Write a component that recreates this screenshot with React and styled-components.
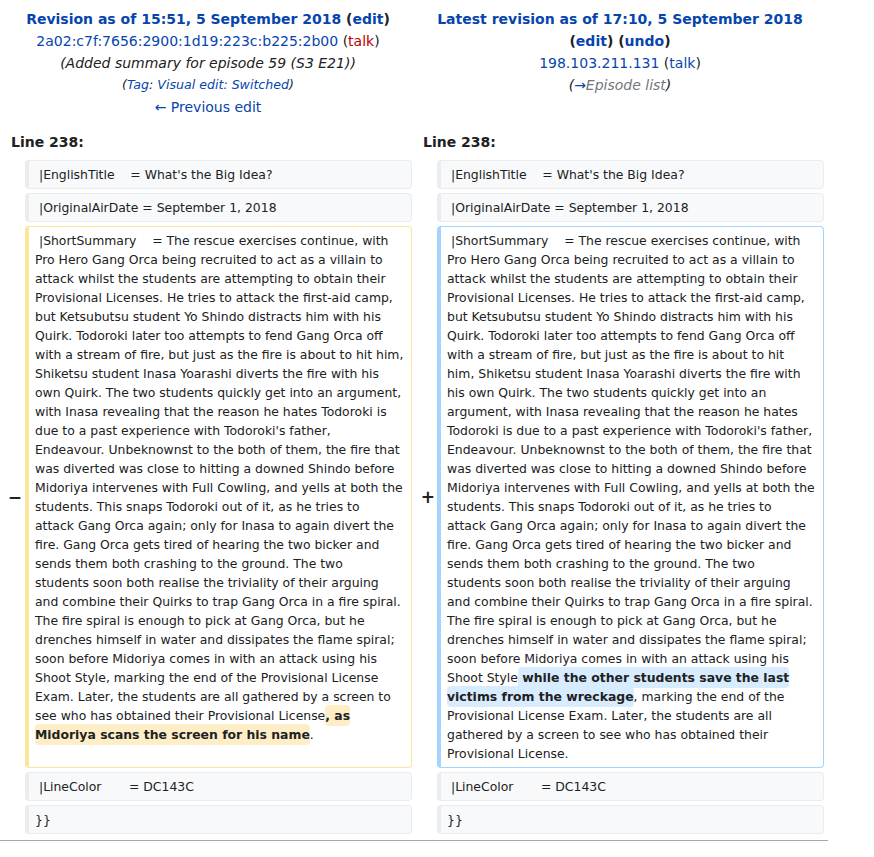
import React from 'react';
import styled, { createGlobalStyle } from 'styled-components';

const GlobalStyle = createGlobalStyle`
    body {
        margin: 0;
        background: #ffffff;
        color: #202122;
        font-family: "DejaVu Sans", sans-serif;
        font-size: 14px;
    }
`

const Page = styled.div`
    width: 828px;
`

const DiffGrid = styled.div`
    display: grid;
    grid-template-columns: 17px 387px 17px 387px;
    gap: 4px;
    padding: 4px;
`

const Header = styled.div`
    grid-column: span 2;
    text-align: center;
    line-height: 22px;
    padding-top: 4px;
`

const HeaderLine = styled.div`
    font-size: ${p => p.small ? '12.6px' : '14px'};
    font-style: ${p => p.italic ? 'italic' : 'normal'};
    font-weight: ${p => p.bold ? 'bold' : 'normal'};
    color: #202122;
`

const A = styled.a`
    color: ${p => p.red ? '#ba0000' : p.muted ? '#72777d' : '#0645ad'};
    text-decoration: none;
`

const LineNo = styled.div`
    grid-column: span 2;
    font-weight: bold;
    line-height: 22px;
    padding: 9px 7px 3px;
`

const Marker = styled.div`
    display: flex;
    align-items: center;
    justify-content: flex-end;
    font-weight: bold;
    font-size: 17px;
    span {
        margin-right: ${p => p.plus ? '-2px' : '-1px'};
    }
`

const Cell = styled.div`
    font-size: 12.42px;
    line-height: 19px;
    white-space: pre-wrap;
    padding: 4px 6px;
    border: 1px solid ${p => p.kind === 'del' ? '#ffe49c' : p.kind === 'ins' ? '#a3d3ff' : '#eaecf0'};
    border-left-width: 4px;
    border-radius: 4px;
    background: ${p => p.kind ? '#ffffff' : '#f8f9fa'};
`

const Change = styled.span`
    font-weight: bold;
    background: ${p => p.kind === 'del' ? '#feeec8' : '#d8ecff'};
    border-radius: 4px;
    padding: 3px 0;
    box-decoration-break: clone;
    -webkit-box-decoration-break: clone;
`

const Divider = styled.div`
    height: 1px;
    margin-top: 2px;
    background: #a2a9b1;
`

// wikitext lines, broken where the rendered diff wraps them
const oldLines = [
    ' |ShortSummary    = The rescue exercises continue, with',
    'Pro Hero Gang Orca being recruited to act as a villain to',
    'attack whilst the students are attempting to obtain their',
    'Provisional Licenses. He tries to attack the first-aid camp,',
    'but Ketsubutsu student Yo Shindo distracts him with his',
    'Quirk. Todoroki later too attempts to fend Gang Orca off',
    'with a stream of fire, but just as the fire is about to hit him,',
    'Shiketsu student Inasa Yoarashi diverts the fire with his',
    'own Quirk. The two students quickly get into an argument,',
    'with Inasa revealing that the reason he hates Todoroki is',
    "due to a past experience with Todoroki's father,",
    'Endeavour. Unbeknownst to the both of them, the fire that',
    'was diverted was close to hitting a downed Shindo before',
    'Midoriya intervenes with Full Cowling, and yells at both the',
    'students. This snaps Todoroki out of it, as he tries to',
    'attack Gang Orca again; only for Inasa to again divert the',
    'fire. Gang Orca gets tired of hearing the two bicker and',
    'sends them both crashing to the ground. The two',
    'students soon both realise the triviality of their arguing',
    'and combine their Quirks to trap Gang Orca in a fire spiral.',
    'The fire spiral is enough to pick at Gang Orca, but he',
    'drenches himself in water and dissipates the flame spiral;',
    'soon before Midoriya comes in with an attack using his',
    'Shoot Style, marking the end of the Provisional License',
    'Exam. Later, the students are all gathered by a screen to',
    'see who has obtained their Provisional License',
].join('\n')

const newLines = [
    ' |ShortSummary    = The rescue exercises continue, with',
    'Pro Hero Gang Orca being recruited to act as a villain to',
    'attack whilst the students are attempting to obtain their',
    'Provisional Licenses. He tries to attack the first-aid camp,',
    'but Ketsubutsu student Yo Shindo distracts him with his',
    'Quirk. Todoroki later too attempts to fend Gang Orca off',
    'with a stream of fire, but just as the fire is about to hit',
    'him, Shiketsu student Inasa Yoarashi diverts the fire with',
    'his own Quirk. The two students quickly get into an',
    'argument, with Inasa revealing that the reason he hates',
    "Todoroki is due to a past experience with Todoroki's father,",
    'Endeavour. Unbeknownst to the both of them, the fire that',
    'was diverted was close to hitting a downed Shindo before',
    'Midoriya intervenes with Full Cowling, and yells at both the',
    'students. This snaps Todoroki out of it, as he tries to',
    'attack Gang Orca again; only for Inasa to again divert the',
    'fire. Gang Orca gets tired of hearing the two bicker and',
    'sends them both crashing to the ground. The two',
    'students soon both realise the triviality of their arguing',
    'and combine their Quirks to trap Gang Orca in a fire spiral.',
    'The fire spiral is enough to pick at Gang Orca, but he',
    'drenches himself in water and dissipates the flame spiral;',
    'soon before Midoriya comes in with an attack using his',
    'Shoot Style',
].join('\n')

const contextBefore = [
    " |EnglishTitle    = What's the Big Idea?",
    ' |OriginalAirDate = September 1, 2018',
]

const contextAfter = [
    ' |LineColor       = DC143C',
    '}}',
]

function ContextRow({ text }) {
    return (
        <>
            <div />
            <Cell>{text}</Cell>
            <div />
            <Cell>{text}</Cell>
        </>
    );
}

export default function App() {
    return (
        <Page>
            <GlobalStyle />
            <DiffGrid>
                <Header>
                    <HeaderLine bold>
                        <A>Revision as of 15:51, 5 September 2018</A> (<A>edit</A>)
                    </HeaderLine>
                    <HeaderLine>
                        <A>2a02:c7f:7656:2900:1d19:223c:b225:2b00</A> (<A red>talk</A>)
                    </HeaderLine>
                    <HeaderLine italic>(Added summary for episode 59 (S3 E21))</HeaderLine>
                    <HeaderLine italic small>
                        (<A>Tag</A>: <A>Visual edit: Switched</A>)
                    </HeaderLine>
                    <HeaderLine>
                        <A>← Previous edit</A>
                    </HeaderLine>
                </Header>
                <Header>
                    <HeaderLine bold>
                        <A>Latest revision as of 17:10, 5 September 2018</A> (<A>edit</A>) (<A>undo</A>)
                    </HeaderLine>
                    <HeaderLine>
                        <A>198.103.211.131</A> (<A>talk</A>)
                    </HeaderLine>
                    <HeaderLine italic>
                        (<A>→</A><A muted>Episode list</A>)
                    </HeaderLine>
                </Header>

                <LineNo>Line 238:</LineNo>
                <LineNo>Line 238:</LineNo>

                {contextBefore.map(t => <ContextRow key={t} text={t} />)}

                <Marker><span>−</span></Marker>
                <Cell kind="del">
                    {oldLines}<Change kind="del">{', as\nMidoriya scans the screen for his name'}</Change>.
                </Cell>
                <Marker plus><span>+</span></Marker>
                <Cell kind="ins">
                    {newLines}<Change kind="ins">{' while the other students save the last\nvictims from the wreckage'}</Change>
                    {', marking the end of the\nProvisional License Exam. Later, the students are all\ngathered by a screen to see who has obtained their\nProvisional License.'}
                </Cell>

                {contextAfter.map(t => <ContextRow key={t} text={t} />)}
            </DiffGrid>
            <Divider />
        </Page>
    );
}
